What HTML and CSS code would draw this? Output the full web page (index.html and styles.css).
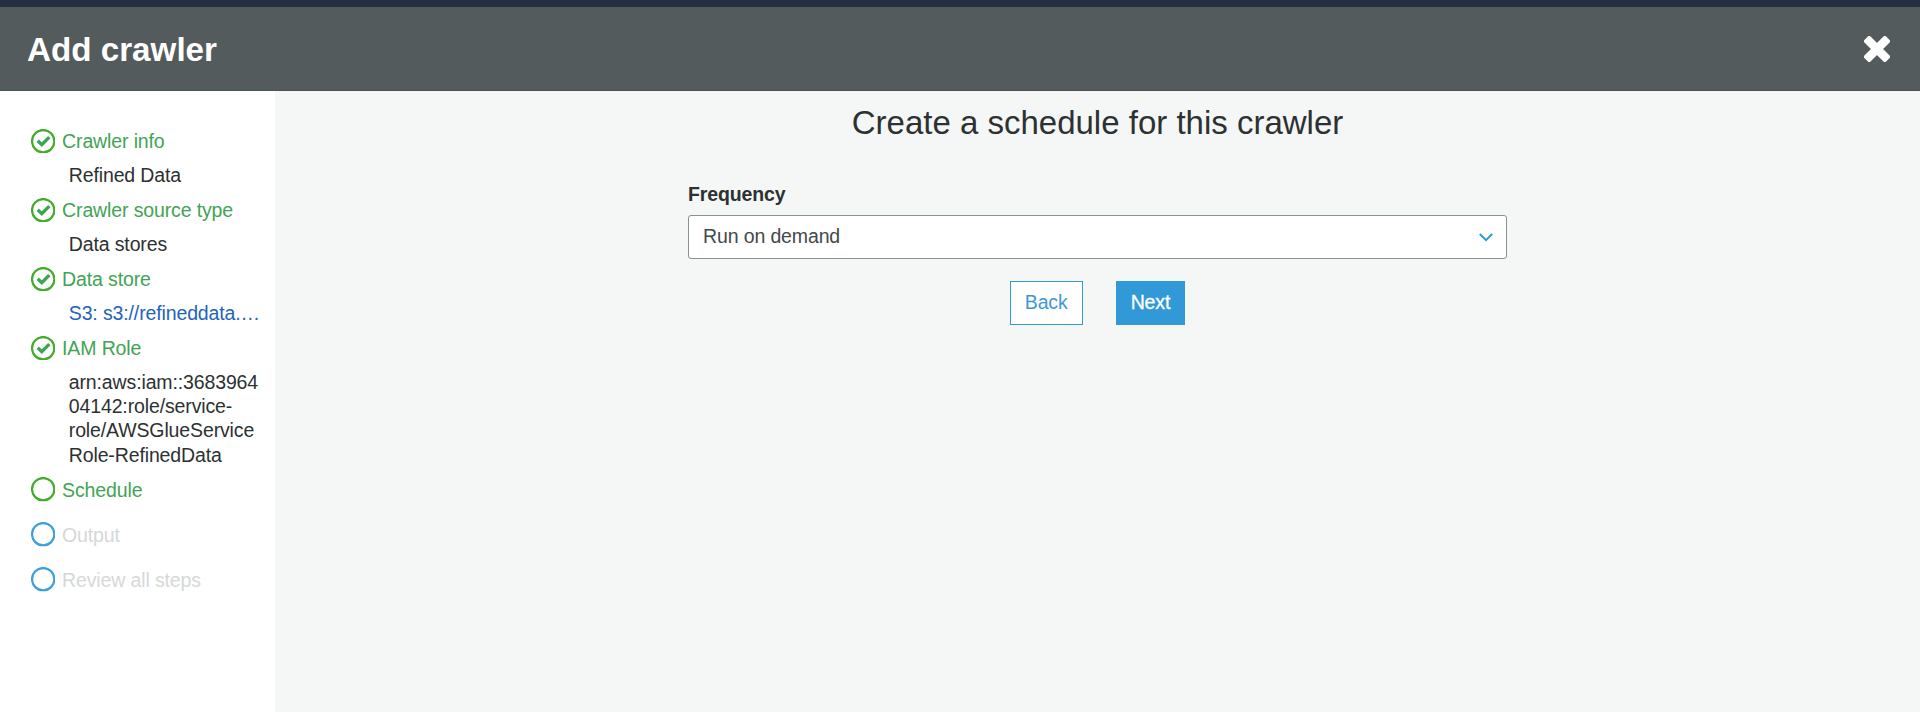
FILE: index.html
```html
<!DOCTYPE html>
<html lang="en">
<head>
<meta charset="utf-8">
<title>Add crawler</title>
<link rel="stylesheet" href="styles.css">
</head>
<body>
<svg class="defs" width="0" height="0">
  <symbol id="done" viewBox="0 0 24 24"><circle cx="12" cy="12" r="11" fill="none" stroke="#43ac2b" stroke-width="2.2"/><path d="M6.6 11.6l4 3.8 7.4-7.4" fill="none" stroke="#3aa650" stroke-width="3.3"/></symbol>
  <symbol id="open" viewBox="0 0 24 24"><circle cx="12" cy="12" r="11" fill="none" stroke="currentColor" stroke-width="2.2"/></symbol>
</svg>
<div class="topbar"></div>
<header class="header">
  <h1 class="header-title">Add crawler</h1>
  <button class="close" aria-label="Close"><svg width="26" height="26" viewBox="0 0 26 26"><path d="M5.2 2.2L2.2 5.2 10 13 2.2 20.8 5.2 23.8 13 16 20.8 23.8 23.8 20.8 16 13 23.8 5.2 20.8 2.2 13 10Z" fill="#fff" stroke="#fff" stroke-width="4.4" stroke-linejoin="round"/></svg></button>
</header>
<div class="body">
  <nav class="steps">
    <div class="step"><div class="step-head"><svg class="icon"><use href="#done"/></svg>Crawler info</div><div class="detail">Refined Data</div></div>
    <div class="step"><div class="step-head"><svg class="icon"><use href="#done"/></svg>Crawler source type</div><div class="detail">Data stores</div></div>
    <div class="step"><div class="step-head"><svg class="icon"><use href="#done"/></svg>Data store</div><div class="detail link">S3: s3://refineddata.…</div></div>
    <div class="step"><div class="step-head"><svg class="icon"><use href="#done"/></svg>IAM Role</div><div class="detail">arn:aws:iam::368396404142:role/service-role/AWSGlueServiceRole-RefinedData</div></div>
    <div class="step"><div class="step-head"><svg class="icon current"><use href="#open"/></svg>Schedule</div></div>
    <div class="step pending"><div class="step-head"><svg class="icon"><use href="#open"/></svg>Output</div></div>
    <div class="step pending"><div class="step-head"><svg class="icon"><use href="#open"/></svg>Review all steps</div></div>
  </nav>
  <main class="main">
    <h2 class="title">Create a schedule for this crawler</h2>
    <div class="form">
      <div class="label">Frequency</div>
      <div class="select"><span>Run on demand</span><svg width="14" height="9" viewBox="0 0 14 9"><path d="M.8 1L7 7.2 13.2 1" fill="none" stroke="#3199d8" stroke-width="2"/></svg></div>
      <div class="actions"><button class="btn">Back</button><button class="btn primary">Next</button></div>
    </div>
  </main>
</div>
</body>
</html>
```
FILE: styles.css
```css
* { box-sizing: border-box; }
body {
  margin: 0;
  height: 712px;
  display: flex;
  flex-direction: column;
  overflow: hidden;
  background: #f4f7f6;
  color: #2d3132;
  font: 19.5px/24px "Liberation Sans", Arial, sans-serif;
  letter-spacing: -0.13px;
}
h1, h2 { margin: 0; letter-spacing: 0; }
.defs { display: none; }
.topbar { height: 7px; background: #242f41; }
.header {
  height: 84px;
  padding: 0 30px 0 27px;
  display: flex;
  align-items: center;
  justify-content: space-between;
  background: #535b5c;
  border-bottom: 1px solid #4b5358;
}
.header-title { color: #fff; font-size: 33.2px; line-height: 40px; padding-top: 2px; }
.close { border: 0; padding: 0; background: none; display: flex; }
.body { flex: 1; display: flex; }
.steps { width: 275px; background: #fff; padding: 38px 10px 0 30.6px; }
.step { padding-bottom: 11px; }
.step-head {
  height: 34px;
  padding-bottom: 10px;
  display: flex;
  align-items: center;
  gap: 7.1px;
  color: #41a454;
}
.icon { width: 24.4px; height: 24.4px; flex: none; }
.current { color: #43ac2b; }
.pending .step-head { color: #d6d8d9; }
.pending .icon { color: #3d9fdb; }
.detail {
  width: 232px;
  padding-left: 38.2px;
  line-height: 24.1px;
  overflow-wrap: anywhere;
}
.link { color: #2263bd; white-space: nowrap; }
.main { flex: 1; display: flex; flex-direction: column; align-items: center; }
.title { margin-top: 12px; font-size: 33px; line-height: 40px; font-weight: 400; }
.form { width: 819px; margin-top: 39px; }
.label { font-weight: 700; }
.select {
  height: 44px;
  margin-top: 9px;
  padding: 0 13px 0 14px;
  display: flex;
  align-items: center;
  justify-content: space-between;
  background: #fff;
  border: 1px solid #879196;
  border-radius: 3px;
  color: #444849;
}
.select span { padding-bottom: 2px; }
.actions { margin-top: 22px; display: flex; justify-content: center; gap: 33px; }
.btn {
  height: 44px;
  padding: 0 14px 2px;
  border: 1px solid #3199d8;
  background: #fff;
  color: #3f98d6;
  font: inherit;
  letter-spacing: inherit;
}
.primary { background: #3199d8; color: #fff; -webkit-text-stroke: 0.3px #fff; }
```
